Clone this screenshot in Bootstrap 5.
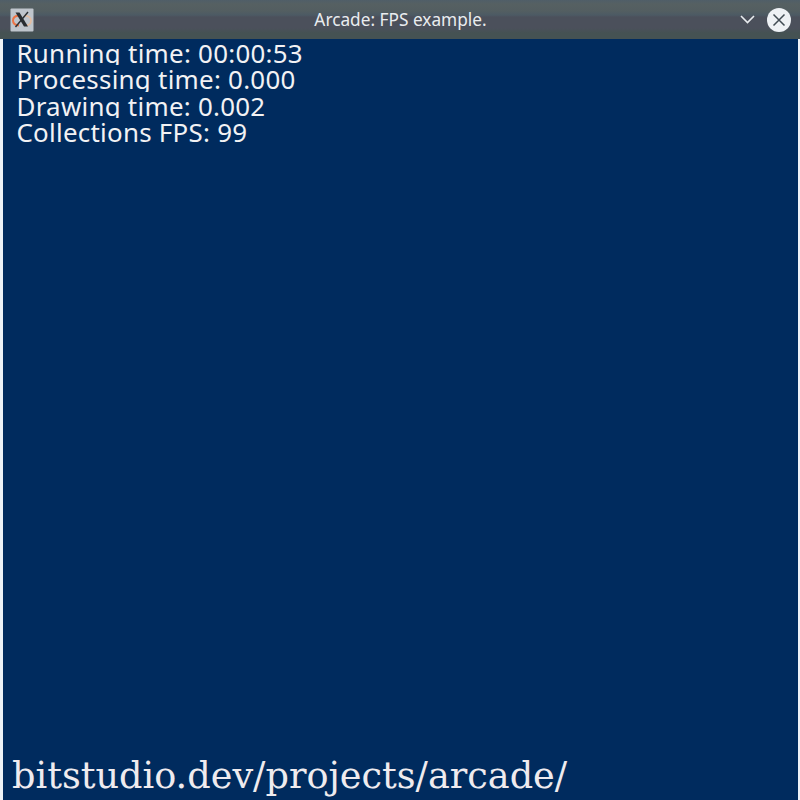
<!DOCTYPE html>
<html lang="en">
<head>
<meta charset="utf-8">
<title>Arcade: FPS example.</title>
<link href="https://cdn.jsdelivr.net/npm/bootstrap@5.3.0/dist/css/bootstrap.min.css" rel="stylesheet">
<style>
html,body{height:100%;overflow:hidden}
body{font-family:"Noto Sans",sans-serif;background:#eef3f8}
.window{height:800px}
.titlebar{height:39px;background:linear-gradient(#505e68 0,#566062 4px,#535e61 11px,#4c5a64 15px,#4b505b 17px,#4b505b 28px,#455253 33px,#455253 39px);display:grid;grid-template-columns:60px 1fr 60px;color:#e9ecef;font-size:17.25px;line-height:24px;padding:0 9px 0 10px}
.canvas{background:#002b5e;margin:0 2px 0 3px;color:#f2f2f4}
.stats{padding-left:13.5px;font-size:25.9px;letter-spacing:.26px}
.line{height:26.4px;line-height:28.6px;overflow:hidden;white-space:nowrap}
.site{font-family:"DejaVu Serif",serif;font-size:36.65px;line-height:41px;padding:0 0 4px 9px;color:#efebef}
</style>
</head>
<body>
<div class="window d-flex flex-column">
<header class="titlebar align-items-center">
<svg width="24" height="24" viewBox="0 0 24 24"><rect x=".5" y=".5" width="23" height="23" rx="1" fill="#bfc5cc"/><path d="M9 7.500Q3 8 3 12.500T9 17.500" fill="none" stroke="#ec7446" stroke-width="2"/><path d="M14 7.500Q21 8 21 12.500T16 17.500" fill="none" stroke="#e5bda1" stroke-width="1.7"/><path d="M5.500 4.500h4l8.500 14h-4z" fill="#292d31"/><path d="M18 4L5.500 19" stroke="#292d31" stroke-width="1.4"/></svg>
<span class="text-center">Arcade: FPS example.</span>
<div class="d-flex align-items-center justify-content-end gap-2"><svg width="20" height="16" viewBox="0 0 20 16" fill="none" stroke="#e9ecef" stroke-width="1.6"><path d="M2 4l6.500 6.500L15 4"/></svg><svg width="24" height="24" viewBox="0 0 24 24"><circle cx="12" cy="12" r="12" fill="#eef1f5"/><path d="M6.500 6.500l11 11M17.500 6.500l-11 11" stroke="#414b54" stroke-width="1.5"/></svg></div>
</header>
<main class="canvas flex-grow-1 d-flex flex-column justify-content-between">
<div class="stats"><div class="line">Running time: 00:00:53</div><div class="line">Processing time: 0.000</div><div class="line">Drawing time: 0.002</div><div class="line">Collections FPS: 99</div></div>
<div class="site">bitstudio.dev/projects/arcade/</div>
</main>
</div>
<script src="https://cdn.jsdelivr.net/npm/bootstrap@5.3.0/dist/js/bootstrap.bundle.min.js"></script>
</body>
</html>
